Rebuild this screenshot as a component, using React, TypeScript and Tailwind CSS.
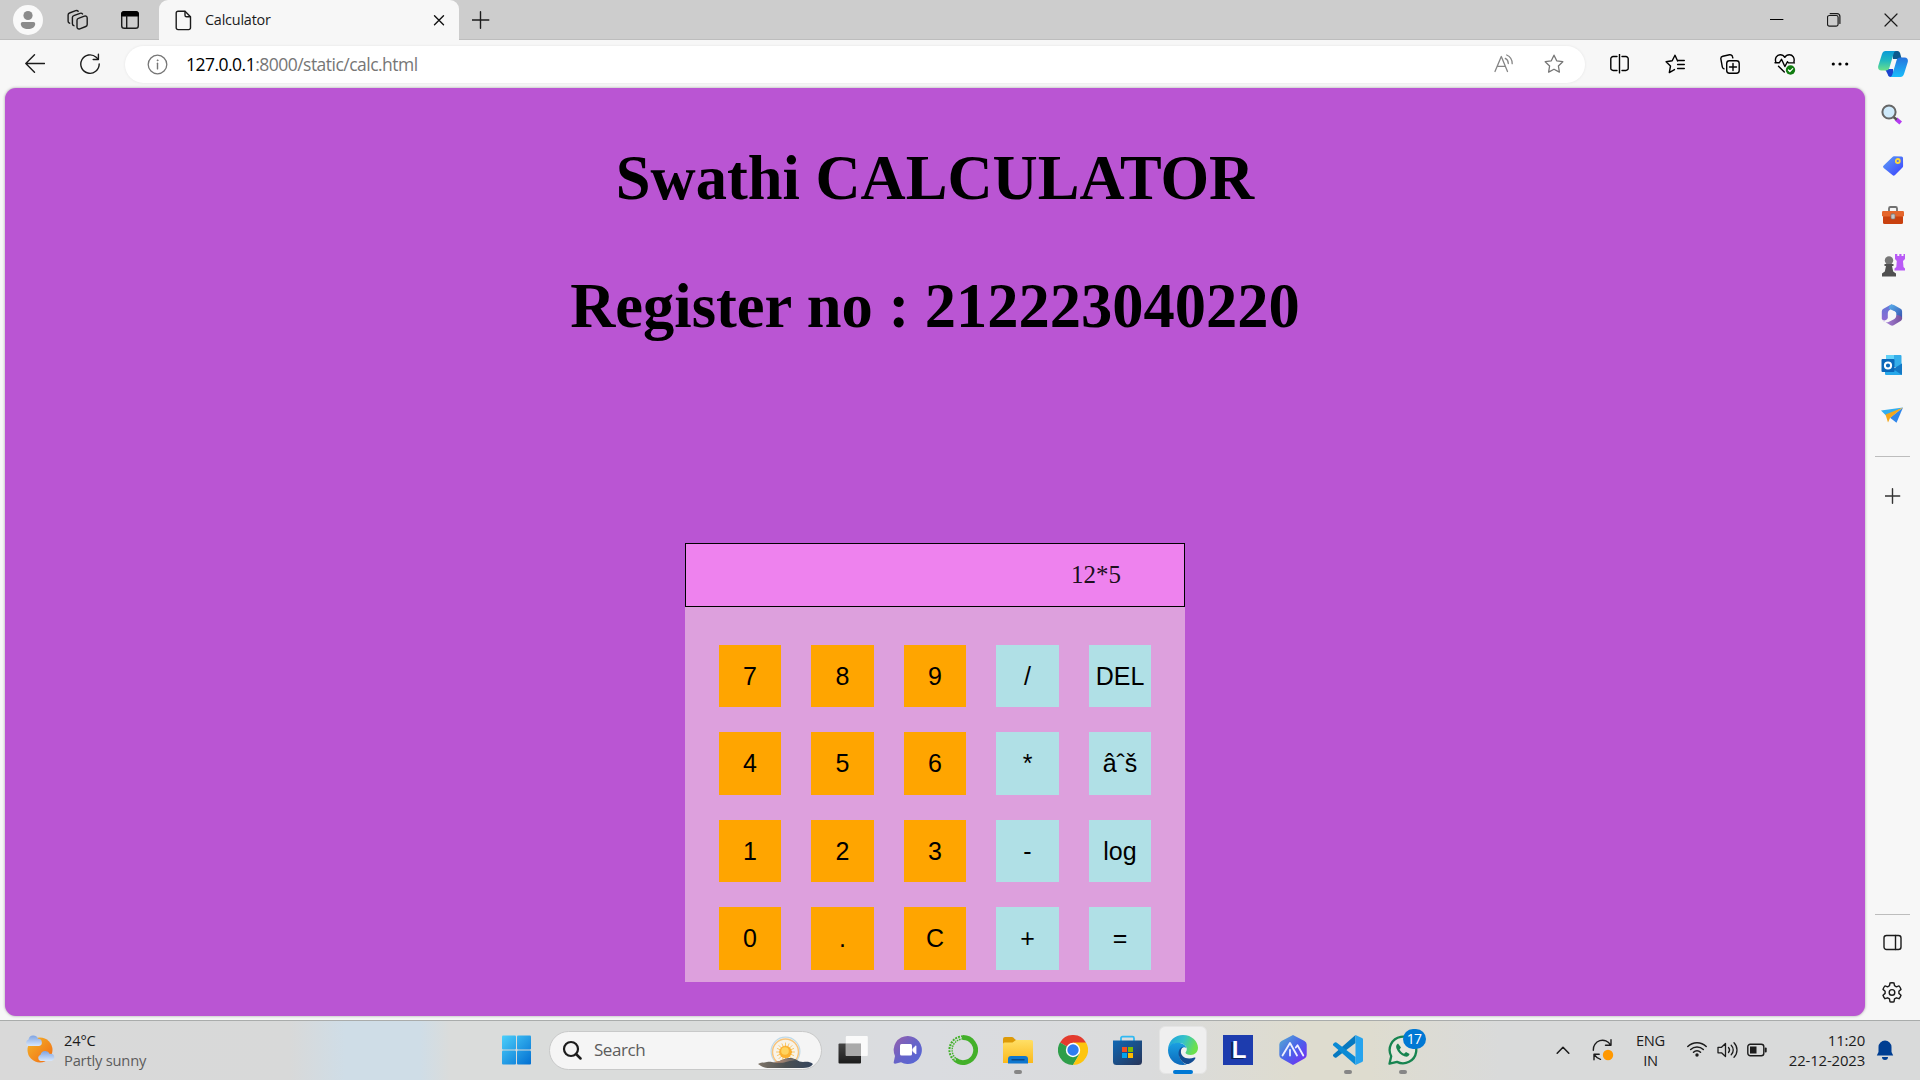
import React from "react";

type IconProps = { size?: number; w?: number; h?: number; className?: string; children: React.ReactNode };

function Icon({ size = 20, w, h, className = "", children }: IconProps) {
  const width = w ?? size;
  const height = h ?? size;
  return (
    <svg
      width={width}
      height={height}
      viewBox={`0 0 ${width} ${height}`}
      fill="none"
      stroke="currentColor"
      strokeWidth={1.4}
      strokeLinecap="round"
      strokeLinejoin="round"
      className={`block shrink-0 ${className}`}
    >
      {children}
    </svg>
  );
}

function Cell({ className = "", children }: { className?: string; children: React.ReactNode }) {
  return <div className={`flex shrink-0 items-center justify-center ${className}`}>{children}</div>;
}

const STAR = "M10 1.2l2.7 5.6 6.1.9-4.4 4.3 1 6.1-5.4-2.9-5.4 2.9 1-6.1L1.2 7.7l6.1-.9z";

function TabBar() {
  return (
    <div className="flex h-10 shrink-0 bg-[#cdcdcd] text-[#1b1b1b]">
      <div className="flex w-[159px] shrink-0 items-center border-b border-[#bdbdbd] pl-[13px]">
        <Cell className="h-[30px] w-[30px] rounded-full bg-[#f9f9f9]">
          <Icon size={30}>
            <g fill="#8b8b8b" stroke="none">
              <circle cx="15" cy="10.500" r="4.600" />
              <path d="M9.500 17h11a1.700 1.700 0 0 1 1.700 1.700c0 3.600-3.200 5.300-7.200 5.300s-7.200-1.700-7.200-5.300A1.700 1.700 0 0 1 9.500 17z" />
            </g>
          </Icon>
        </Cell>
        <Cell className="ml-6 w-[21px]">
          <Icon size={22}>
            <path d="M11.400 9.300l6-2.200c1.600-.5 2.800.3 2.800 1.900v6.500c0 1-.5 1.700-1.400 2l-6 2.300c-1.500.5-2.800-.3-2.800-1.900V11.300c0-1 .5-1.700 1.400-2z" />
            <path d="M6.900 16.700c-1-.3-1.500-.9-1.500-1.900V8.600c0-1 .5-1.700 1.400-2l6.200-2.300c1-.3 1.900-.1 2.500.6" />
            <path d="M2.600 14.200c-1-.3-1.500-.9-1.500-1.900V6c0-1 .5-1.700 1.400-2l6.200-2.300c1-.3 1.900-.1 2.500.6" />
          </Icon>
        </Cell>
        <Cell className="ml-8 w-5">
          <Icon size={20}>
            <rect x="1.700" y="1.700" width="16.600" height="16.600" rx="2.600" />
            <path d="M1.700 5.800V4.300a2.600 2.600 0 0 1 2.600-2.600h11.400a2.600 2.600 0 0 1 2.600 2.600v1.500z" fill="#000" stroke="#000" />
            <path d="M6.700 6v12" />
          </Icon>
        </Cell>
      </div>
      <div className="flex w-[300px] shrink-0 items-center rounded-t-[9px] bg-[#f7f7f7] pl-4">
        <Icon w={17} h={21}>
          <path d="M3 1.200h7l5.500 5.500v11.100a1.800 1.800 0 0 1-1.800 1.800H3a1.800 1.800 0 0 1-1.800-1.800V3A1.800 1.800 0 0 1 3 1.200z" />
          <path d="M10 1.500v3.700A1.600 1.600 0 0 0 11.600 6.800h3.700" />
        </Icon>
        <span className="ml-[13px] text-[14.400px] leading-5 tracking-[-0.200px]">Calculator</span>
        <Icon size={12} className="mr-[14px] ml-auto">
          <path d="M1.500 1.700l9 9M10.500 1.700l-9 9" stroke="#111" />
        </Icon>
      </div>
      <div className="flex grow items-center border-b border-[#bdbdbd] pl-[13px]">
        <Icon size={18}>
          <path d="M8.500 .7v16.600M.2 9h16.600" />
        </Icon>
        <div className="ml-auto flex">
          <Cell className="w-[57px]">
            <Icon size={14}><path d="M.1 6.500h12.800" stroke="#000" strokeWidth={1.200} /></Icon>
          </Cell>
          <Cell className="w-[57px]">
            <Icon size={14}>
              <rect x=".5" y="2.500" width="10.600" height="10.600" rx="1.800" strokeWidth={1.200} />
              <path d="M3.200.7h7a2.700 2.700 0 0 1 2.700 2.700v7" strokeWidth={1.200} />
            </Icon>
          </Cell>
          <Cell className="w-[58px]">
            <Icon size={14}><path d="M1 1l12 12M13 1L1 13" strokeWidth={1.200} /></Icon>
          </Cell>
        </div>
      </div>
    </div>
  );
}

function Toolbar() {
  return (
    <div className="flex h-12 shrink-0 items-center bg-[#f7f7f7] text-[#1b1b1b]">
      <Cell className="ml-[7px] w-[55px]">
        <Icon size={20}><path d="M19.500 9.500H.8M9.500 .8L.8 9.500l8.700 8.700" /></Icon>
      </Cell>
      <Cell className="w-[55px]">
        <Icon size={22}>
          <path d="M20.200 11a9.200 9.200 0 1 1-3-6.700l2 1.900" />
          <path d="M19.400 1.300v5.200h-5.200" />
        </Icon>
      </Cell>
      <div className="ml-2 flex h-[37px] w-[1460px] shrink-0 items-center rounded-full bg-white pl-[22px] text-[#767676] shadow-[0_0_3px_rgba(0,0,0,0.080)]">
        <Icon size={21}>
          <circle cx="10.500" cy="10.500" r="9.300" strokeWidth={1.300} />
          <path d="M10.500 9.300v5.600" />
          <circle cx="10.500" cy="6.300" r=".5" fill="currentColor" strokeWidth={0.800} />
        </Icon>
        <span className="-mt-px ml-[18px] text-[17.500px] leading-6 tracking-[-0.520px]">
          <span className="text-black">127.0.0.1</span>:8000/static/calc.html
        </span>
        <div className="mr-[6px] ml-auto flex">
          <Cell className="w-[50px]">
            <Icon size={20} className="text-[#858585]">
              <path d="M1 17.500L7.300 2.500l6.200 15M3.300 12.300h8" strokeWidth={1.300} />
              <path d="M11.300 4.400c1.900 1 3 2.900 3 5.200M12.700 1c3.400 1.500 5.500 4.800 5.500 8.700" strokeWidth={1.300} />
            </Icon>
          </Cell>
          <Cell className="w-[50px]">
            <Icon size={20}><path d={STAR} strokeWidth={1.300} /></Icon>
          </Cell>
        </div>
      </div>
      <div className="ml-[7px] flex text-black">
        <Cell className="w-[55px]">
          <Icon size={20}>
            <path d="M7 2.500H3.200A2.300 2.300 0 0 0 .8 4.800v9.400a2.300 2.300 0 0 0 2.400 2.300H7M12 2.500h3.800a2.300 2.300 0 0 1 2.400 2.300v9.400a2.300 2.300 0 0 1-2.400 2.300H12M9.500 .3v18.600" />
          </Icon>
        </Cell>
        <Cell className="w-[55px]">
          <Icon size={20}>
            <path d="M12.600 7L10 1.200 7.200 6.800l-6.100.9 4.400 4.300-1.200 6.600 5.200-3M12.600 6.500h6.700M12.600 10.500h6.700M12.600 14.500h6.700" />
          </Icon>
        </Cell>
        <Cell className="w-[55px]">
          <Icon size={20}>
            <rect x="6.700" y="6.700" width="12.500" height="12.500" rx="2.700" />
            <path d="M13 9.500v7M9.500 13h7" />
            <path d="M4 14.800a2.500 2.500 0 0 1-1.700-2L.9 5.200A2.500 2.500 0 0 1 2.800 2.300L9.500.8a2.500 2.500 0 0 1 3 1.900l.3 1.200" />
          </Icon>
        </Cell>
        <Cell className="w-[55px]">
          <Icon size={22}>
            <path d="M1.800 9C.5 5 3 1.700 6.200 1.700c2 0 3.700 1 4.600 2.600.9-1.600 2.600-2.600 4.600-2.600C18.700 1.700 21 5 19.900 9" />
            <path d="M1 9.800h4.200l2.300-3.500 3.400 7.200 2.500-4.800 1 1.200h6M4.500 13.200l5.800 5.800" />
            <circle cx="16.500" cy="17" r="4.700" fill="#107c10" stroke="none" />
            <path d="M14.400 17l1.500 1.500 2.800-2.900" stroke="#fff" strokeWidth={1.200} />
          </Icon>
        </Cell>
        <Cell className="w-[55px]">
          <Icon size={18}>
            <g fill="currentColor" stroke="none">
              <circle cx="2.300" cy="9" r="1.600" />
              <circle cx="9" cy="9" r="1.600" />
              <circle cx="15.700" cy="9" r="1.600" />
            </g>
          </Icon>
        </Cell>
        <Cell className="w-[51px]">
          <Icon w={30} h={28}>
            <defs>
              <linearGradient id="coA" x1="0" y1="0" x2="0" y2="1"><stop stopColor="#0a9ad7" /><stop offset=".5" stopColor="#22b9bf" /><stop offset="1" stopColor="#6be08a" /></linearGradient>
              <linearGradient id="coB" x1="0" y1="0" x2="0" y2="1"><stop stopColor="#2673dd" /><stop offset="1" stopColor="#19bdfb" /></linearGradient>
            </defs>
            <g stroke="none">
              <path d="M14 1h5.500c1.500 0 2.200 1 2.700 2.600L23.700 9H15z" fill="#0c5a8e" />
              <path d="M7 19h8l1 8h-3.500c-1.600 0-2.300-1-2.800-2.700z" fill="#1b44cf" />
              <path d="M7.500 1H18.500c-1.800 0-2.500 1.300-3 3l-4 13.500c-.6 2-1.500 3-3.600 3H3.500C.3 20.500-.3 18 .3 15.700L4 4C4.700 2 5.800 1 7.500 1z" fill="url(#coA)" />
              <path d="M22.500 27H11.500c1.800 0 2.500-1.300 3-3l4-13.500c.6-2 1.500-3 3.600-3h4.400c3.200 0 3.800 2.500 3.200 4.800L26 24c-.7 2-1.800 3-3.500 3z" fill="url(#coB)" />
            </g>
          </Icon>
        </Cell>
      </div>
    </div>
  );
}

const DIGIT = "bg-[#ffa500]";
const OP = "bg-[#b0e0e6]";
const KEYS: [string, string][] = [
  ["7", DIGIT], ["8", DIGIT], ["9", DIGIT], ["/", OP], ["DEL", OP],
  ["4", DIGIT], ["5", DIGIT], ["6", DIGIT], ["*", OP], ["âˆš", OP],
  ["1", DIGIT], ["2", DIGIT], ["3", DIGIT], ["-", OP], ["log", OP],
  ["0", DIGIT], [".", DIGIT], ["C", DIGIT], ["+", OP], ["=", OP],
];

function Page() {
  return (
    <main className="ml-[5px] flex h-[928px] w-[1860px] shrink-0 flex-col items-center rounded-[11px] bg-[#ba55d3] pt-[54px] text-black shadow-[0_0_3px_rgba(0,0,0,0.350)]">
      <h1 className="font-['Liberation_Serif',serif] text-[62.500px] leading-[72px] font-bold">Swathi CALCULATOR</h1>
      <h1 className="mt-[56px] font-['Liberation_Serif',serif] text-[62.500px] leading-[72px] font-bold">Register no : 212223040220</h1>
      <div className="mt-[201px] h-[439px] w-[500px] bg-[#dda0dd]">
        <div className="flex h-16 items-center justify-end border border-black bg-[#ee82ee] pr-[63px] font-['Liberation_Serif',serif] text-[25px] text-black/90">
          12*5
        </div>
        <div className="mt-[37.500px] ml-[33.750px] grid grid-cols-[repeat(5,62.500px)] gap-x-[30px] gap-y-[25px]">
          {KEYS.map(([label, tone]) => (
            <button key={label} className={`h-[62.500px] pt-px font-['Liberation_Sans',sans-serif] text-[25px] ${tone}`}>
              {label}
            </button>
          ))}
        </div>
      </div>
    </main>
  );
}

function Sidebar() {
  const cell = "h-[50px] w-full";
  return (
    <aside className="flex w-[55px] shrink-0 flex-col items-center pt-[2px] text-[#1b1b1b]">
      <Cell className={cell}>
        <Icon size={22} className="-ml-[2px]">
          <path d="M15 15l4.700 4" stroke="#b43bf0" strokeWidth={4} strokeLinecap="butt" />
          <path d="M12.500 13l2.500 2" stroke="#555" strokeWidth={2.500} />
          <circle cx="8" cy="8" r="6.600" fill="#cfeafb" stroke="#666" strokeWidth={2} />
        </Icon>
      </Cell>
      <Cell className={cell}>
        <Icon size={22} className="mt-px">
          <defs><linearGradient id="tag" x1="0" y1="0" x2="1" y2="1"><stop stopColor="#5ea2f4" /><stop offset="1" stopColor="#3a3fff" /></linearGradient></defs>
          <path d="M12 1.200l7.500.3a1.500 1.500 0 0 1 1.500 1.500l.1 8a2 2 0 0 1-.6 1.500l-7.500 7.600a1.800 1.800 0 0 1-2.600 0l-8.700-7a1.700 1.700 0 0 1 0-2.600L10.500 2a2 2 0 0 1 1.500-.8z" fill="url(#tag)" stroke="none" />
          <circle cx="15.800" cy="6" r="2" stroke="#ffd93a" strokeWidth={1.800} />
        </Icon>
      </Cell>
      <Cell className={cell}>
        <Icon size={22} className="mt-[2px]">
          <path d="M7 6V3.500A1.500 1.500 0 0 1 8.500 2h5A1.500 1.500 0 0 1 15 3.500V6" stroke="#707070" strokeWidth={1.800} />
          <rect x="1" y="10" width="20" height="9" rx="1.500" fill="#c9410f" stroke="none" />
          <rect x="0" y="6" width="22" height="5.500" rx="1.200" fill="#e5662c" stroke="none" />
          <rect x="9" y="9" width="4" height="5" rx="1" fill="#c6c6c6" stroke="#777" strokeWidth={0.700} />
        </Icon>
      </Cell>
      <Cell className={cell}>
        <Icon size={24}>
          <g stroke="none">
            <path d="M14 1h2.300v2h2V1h2.200v2h2V1H24v5l-2 2 .5 6 1.500 1.500v2H13.500v-2l1.800-1.500.5-6L14 6z" fill="#b95af6" />
            <circle cx="8" cy="7.500" r="4.200" fill="#777" />
            <path d="M3.500 11h9v2H11l1.200 5.500 2.800 2V23.500H1V20.500l2.800-2L5 13H3.500z" fill="#505050" />
          </g>
        </Icon>
      </Cell>
      <Cell className={cell}>
        <Icon size={22} className="-ml-px">
          <defs>
            <linearGradient id="mA" x1="0" y1="0" x2="0" y2="1"><stop stopColor="#5f78d8" /><stop offset="1" stopColor="#8e6ad2" /></linearGradient>
            <linearGradient id="mB" x1="0" y1="0" x2="1" y2="1"><stop stopColor="#5ab4ee" /><stop offset="1" stopColor="#3550ae" /></linearGradient>
            <linearGradient id="mC" x1="0" y1="0" x2="1" y2="0"><stop stopColor="#b48ee6" /><stop offset="1" stopColor="#74509c" /></linearGradient>
          </defs>
          <g stroke="none">
            <path d="M11 0L2.500 4.700A3 3 0 0 0 .8 7.400v7.400c1 2.500 5 2 6-.8V9.500c0-2 1-3.200 2.500-4z" fill="url(#mA)" />
            <path d="M9 1.200C10.300.3 11.700.3 13 1l6.600 3.700a3 3 0 0 1 1.500 2.700v7.200L15.300 11V9.700c0-1-.4-1.800-1.300-2.300L7.500 4.500z" fill="url(#mB)" />
            <path d="M.8 14.800c.5 1 1 1.700 1.800 2.200l7 4.300a3 3 0 0 0 3 0l7-4.300a3 3 0 0 0 1.500-2.500c.2-2-2-3.500-5.800-3.500 0 2-1 3.500-2.800 4.500L8 17.800c-2.600 1.300-6 .2-7.200-3z" fill="url(#mC)" />
            <circle cx="11" cy="10.700" r="3.900" fill="#f7f7f7" />
          </g>
        </Icon>
      </Cell>
      <Cell className={cell}>
        <Icon size={22} className="-ml-px">
          <g stroke="none">
            <rect x="5" y="1" width="15.500" height="12" rx="1" fill="#35aeea" />
            <path d="M5 1h8v8H5z" fill="#62d2f8" />
            <path d="M4 10l9 5 8-5.500V20a1 1 0 0 1-1 1H5a1 1 0 0 1-1-1z" fill="#28a8ea" />
            <path d="M21 9.500V21L12 15z" fill="#1478c5" />
            <rect x=".5" y="5" width="13" height="13" rx="1" fill="#0b67b9" />
          </g>
          <circle cx="7" cy="11.500" r="3.100" stroke="#fff" strokeWidth={2} />
        </Icon>
      </Cell>
      <Cell className={cell}>
        <Icon size={22} className="-ml-px">
          <g stroke="none">
            <path d="M0 6.500L22 3.500 5.500 12z" fill="#32aef0" />
            <path d="M22 3.500l-6.500 15.200-6.500-5z" fill="#2f86ea" />
            <path d="M4.500 10.500L22 3.500 9 14l-2 4.500z" fill="#f3a71c" />
          </g>
        </Icon>
      </Cell>
      <div className="mt-4 h-px w-[35px] bg-[#bdbdbd]" />
      <Icon size={16} className="mt-[31px]"><path d="M7.500 .8v14.400M.3 8h14.400" stroke="#333" /></Icon>
      <div className="mt-auto h-px w-[35px] bg-[#bdbdbd]" />
      <Cell className="mt-[3px] h-[50px] w-full">
        <Icon size={20}>
          <rect x="1" y="2.500" width="17" height="14" rx="2.500" />
          <path d="M12.500 2.500v14" />
        </Icon>
      </Cell>
      <Cell className="mb-[2px] h-[50px] w-full">
        <Icon size={22} className="-ml-px">
          <path d="M9 1a9.500 9.500 0 0 1 4 0l.5 2.700 1.900 1.100 2.600-.9a9.500 9.500 0 0 1 2 3.500l-2.100 1.800v2.200l2.100 1.800a9.500 9.500 0 0 1-2 3.500l-2.600-.9-1.900 1.100L13 19.800a9.500 9.500 0 0 1-4 0l-.5-2.900-1.900-1.100-2.600.9a9.500 9.500 0 0 1-2-3.500l2.100-1.800V9.200L2 7.400a9.500 9.500 0 0 1 2-3.500l2.600.9 1.900-1.100z" />
          <circle cx="11" cy="10.400" r="2.800" />
        </Icon>
      </Cell>
    </aside>
  );
}

function AppSlot({ dot = false, active = false, children }: { dot?: boolean; active?: boolean; children: React.ReactNode }) {
  return (
    <div className="flex w-[55px] shrink-0 justify-center">
      <div
        className={
          active
            ? "relative flex h-12 w-12 items-center justify-center rounded-md border border-[#e4e4e4] bg-[#efefef]"
            : "relative flex h-12 w-12 items-center justify-center"
        }
      >
        {children}
        {dot && <span className="absolute bottom-0 h-1 w-2 rounded-full bg-[#868686]" />}
        {active && <span className="absolute -bottom-px h-1 w-5 rounded-full bg-[#0078d4]" />}
      </div>
    </div>
  );
}

function Taskbar() {
  return (
    <footer className="flex h-[60px] shrink-0 items-center border-t border-[#a9acab] bg-[linear-gradient(90deg,#d9d9d9_0px,#d8d9d9_290px,#cfdde7_345px,#cfdde7_420px,#dadcdb_450px,#dadcdb_700px,#dadce0_930px,#dadbdc_1150px,#dedccf_1300px,#dedccf_1370px,#d9dada_1500px,#d9dada_1920px)] pb-px text-[#1c1c1c]">
      <div className="flex w-[489px] shrink-0 items-center pl-[25px]">
        <Icon size={30} className="-mt-[3px]">
          <defs>
            <linearGradient id="sun" x1="0" y1="0" x2="1" y2="1"><stop stopColor="#f3b62b" /><stop offset="1" stopColor="#f26a12" /></linearGradient>
            <linearGradient id="cloud" x1="0" y1="0" x2="0" y2="1"><stop stopColor="#7fa4e3" /><stop offset="1" stopColor="#d8e7fb" /></linearGradient>
          </defs>
          <g stroke="none">
            <circle cx="15" cy="16" r="12.500" fill="url(#sun)" />
            <path d="M3.500 12a3.400 3.400 0 0 1 0-6.500A5 5 0 0 1 13 4.700 3.700 3.700 0 0 1 14 12z" fill="url(#cloud)" />
            <path d="M15.500 27a3.300 3.300 0 0 1 0-6.300 5 5 0 0 1 9.300-.8A3.600 3.600 0 0 1 26.500 27z" fill="url(#cloud)" />
          </g>
        </Icon>
        <div className="-mt-px ml-[9px] text-[14.700px] leading-5">
          <div className="tracking-[-0.200px]">24°C</div>
          <div className="tracking-[-0.200px] text-[#5c5c5c]">Partly sunny</div>
        </div>
      </div>
      <AppSlot>
        <Icon size={30}>
          <defs><linearGradient id="win" gradientUnits="userSpaceOnUse" x1="0" y1="0" x2="30" y2="30"><stop stopColor="#4cd0fb" /><stop offset="1" stopColor="#006cd0" /></linearGradient></defs>
          <g stroke="none" fill="url(#win)">
            <rect x="0" y=".5" width="14" height="14" rx="1" />
            <rect x="15" y=".5" width="14" height="14" rx="1" />
            <rect x="0" y="15.500" width="14" height="14" rx="1" />
            <rect x="15" y="15.500" width="14" height="14" rx="1" />
          </g>
        </Icon>
      </AppSlot>
      <div className="ml-[5px] flex h-[39px] w-[273px] shrink-0 items-center rounded-full border border-[#c8c9c9] bg-[#f5f5f5] pl-3">
        <Icon size={20}>
          <circle cx="9" cy="9" r="7" strokeWidth={2.200} />
          <path d="M14 14l4.500 4.500" strokeWidth={2.500} />
        </Icon>
        <span className="ml-3 text-[17px] leading-6 tracking-[-0.450px] text-[#5c5c5c]">Search</span>
        <Icon w={56} h={33} className="mt-[4px] mr-[7px] ml-auto">
          <defs>
            <linearGradient id="hill" x1="0" y1="0" x2="1" y2="0"><stop stopColor="#7e7468" /><stop offset=".5" stopColor="#4b5052" /><stop offset="1" stopColor="#33445d" /></linearGradient>
            <linearGradient id="hillTop" x1="0" y1="0" x2="1" y2="0"><stop stopColor="#c69273" /><stop offset="1" stopColor="#5f6468" /></linearGradient>
          </defs>
          <circle cx="27.500" cy="15.500" r="14.400" stroke="#bed9e8" strokeWidth={1.200} />
          <circle cx="27.500" cy="16" r="13" stroke="#f7c37b" strokeWidth={1.400} fill="#f8f3e8" />
          <g stroke="#f7b637" strokeWidth={0.700}>
            <path d="M27.500 7v18M18.500 16h18M21 9.600l13 13M34 9.600l-13 13M24 7.800l7 16.400M31 7.800l-7 16.400M19.300 12.500l16.400 7M19.300 19.500l16.400-7" />
          </g>
          <circle cx="27.500" cy="16" r="6" fill="#fdb22e" stroke="#f8a21c" strokeWidth={0.500} />
          <circle cx="27" cy="15" r="3.800" fill="#ffd45f" stroke="none" />
          <path d="M0 28c3-2 6-1 9-2 4-1 6 1 9 0 5-1 9-4 14-4 6 0 8 4 13 4 3 0 6-1 10 2-2 3-6 4-10 4H12c-5 0-8-1-12-4z" fill="url(#hill)" stroke="none" />
          <path d="M15 26c7 0 10-3.500 17-3.500 3 0 5 1 7 1.700-7 0-12 2.600-16 2.600-4 0-5 0-8-.8z" fill="url(#hillTop)" stroke="none" />
        </Icon>
      </div>
      <div className="ml-[3px] flex">
        <AppSlot>
          <Icon size={30}>
            <defs><linearGradient id="tv" x1="0" y1="0" x2="0" y2="1"><stop stopColor="#444" /><stop offset="1" stopColor="#1c1c1c" /></linearGradient></defs>
            <rect x=".5" y="8.500" width="22.500" height="20" rx="1" fill="url(#tv)" stroke="none" />
            <rect x="7.800" y="1" width="22" height="20" rx="1" fill="#fff" fillOpacity=".85" stroke="none" />
            <rect x="7.800" y="8.500" width="15.200" height="12.500" fill="#aaa" stroke="none" />
          </Icon>
        </AppSlot>
        <AppSlot>
          <Icon size={30}>
            <defs><linearGradient id="chat" x1="0" y1="0" x2="1" y2="1"><stop stopColor="#9860ac" /><stop offset=".5" stopColor="#6763c8" /><stop offset="1" stopColor="#5367d8" /></linearGradient></defs>
            <path d="M15 1a14 14 0 1 1-7 26.200L2 28.700c-1 0-1.500-.5-1.300-1.500L2 21A14 14 0 0 1 15 1z" fill="url(#chat)" stroke="none" />
            <rect x="7" y="9" width="12" height="11.500" rx="1.500" fill="#fff" stroke="none" />
            <path d="M20 13.500l3-2.700v8.200L20 16.500z" fill="#fff" stroke="#fff" strokeWidth={0.800} />
          </Icon>
        </AppSlot>
        <AppSlot>
          <Icon size={30}>
            <path d="M15 2.500a12.500 12.500 0 1 1-8 22" stroke="#43b02a" strokeWidth={4.800} strokeLinecap="butt" />
            <path d="M15 2.500A12.500 12.500 0 0 0 7 24.500" stroke="#43b02a" strokeWidth={4.400} strokeLinecap="butt" strokeDasharray="1.800 1" />
            <path d="M13.500 2.800A12.500 12.500 0 0 0 7.500 24.800" stroke="#d9dde0" strokeWidth={1.100} strokeDasharray="2 1.500" />
          </Icon>
        </AppSlot>
        <AppSlot dot>
          <Icon size={30}>
            <defs><linearGradient id="fold" x1="0" y1="0" x2="0" y2="1"><stop stopColor="#ffdf66" /><stop offset="1" stopColor="#fbb91b" /></linearGradient></defs>
            <g stroke="none">
              <path d="M0 4a2 2 0 0 1 2-2h7c2 0 2.500 3 4.500 3v4H0z" fill="#dd9a08" />
              <path d="M13 5h15.500A1.500 1.500 0 0 1 30 6.500V28H0V9A1.500 1.500 0 0 1 1.500 7.500H9.500z" fill="url(#fold)" />
              <path d="M5 28.500V24a3 3 0 0 1 3-3h14a3 3 0 0 1 3 3v4.500z" fill="#0f77cf" />
            </g>
            <path d="M9 24.700h12" stroke="#0b4a86" />
          </Icon>
        </AppSlot>
        <AppSlot>
          <Icon size={30}>
            <g stroke="none">
              <path d="M15 15L2 7.500A15 15 0 0 1 28 7.500z" fill="#e33b2e" />
              <path d="M15 15L2 7.500A15 15 0 0 0 15 30l6.500-11z" fill="#2e9e4a" />
              <path d="M15 15V7.500h13A15 15 0 0 1 15 30l6.500-11z" fill="#fdc50e" />
              <circle cx="15" cy="15" r="7.200" fill="#fff" />
              <circle cx="15" cy="15" r="5.700" fill="#2f7cf0" />
            </g>
          </Icon>
        </AppSlot>
        <AppSlot>
          <Icon size={30}>
            <defs><linearGradient id="store" x1="0" y1="0" x2="1" y2="1"><stop stopColor="#0f68b5" /><stop offset="1" stopColor="#273458" /></linearGradient></defs>
            <path d="M8 6V3.200a1.500 1.500 0 0 1 1.500-1.500h10a1.500 1.500 0 0 1 1.500 1.500V6" stroke="#31b9f2" strokeWidth={1.800} />
            <path d="M0 5.500h29v21A3.500 3.500 0 0 1 25.500 30H3.500A3.500 3.500 0 0 1 0 26.500z" fill="url(#store)" stroke="none" />
            <g stroke="none">
              <rect x="9" y="12" width="5" height="5" fill="#f25022" />
              <rect x="15" y="12" width="5" height="5" fill="#7fba00" />
              <rect x="9" y="18" width="5" height="5" fill="#00a4ef" />
              <rect x="15" y="18" width="5" height="5" fill="#ffb900" />
            </g>
          </Icon>
        </AppSlot>
        <AppSlot active>
          <Icon size={30}>
            <defs>
              <linearGradient id="edA" x1="0" y1="0" x2="1" y2=".3"><stop stopColor="#1b9ee0" /><stop offset=".55" stopColor="#35c2c9" /><stop offset="1" stopColor="#6be04c" /></linearGradient>
              <linearGradient id="edB" x1="0" y1="0" x2="0" y2="1"><stop stopColor="#1aa0e2" /><stop offset="1" stopColor="#0c68bb" /></linearGradient>
            </defs>
            <g stroke="none">
              <path d="M0 14C.8 5.500 7 0 15 0c9 0 15 6.500 15 12.800 0 4.500-3.300 7.200-7.200 7.200-3.300 0-5.300-1-5.300-2.200 0-.8 1.300-1.300 1.300-3.800 0-3-3.500-6-8-6C5.500 8 1.500 10.500 0 14z" fill="url(#edA)" />
              <path d="M0 15c0-4.500 4.500-7.300 9.500-7.300 4.500 0 8.300 2.300 9 5.300-4-2.500-8.500 2-7.200 8 1 4.500 4.200 7.500 7.700 8.500C8 32 0 24.500 0 15z" fill="url(#edB)" />
              <path d="M15.500 11.700c-3.800.3-5.800 4.800-4.500 9.300 1.600 5.500 6 8.500 9.500 8 3-1 5.500-3.300 6.800-5.500.4-.8-.2-1.200-1-.9-7.500 3-14.300-1-13.300-7 .2-1.700 1-3 2.500-3.900z" fill="#134c92" />
            </g>
          </Icon>
        </AppSlot>
        <AppSlot>
          <div className="flex h-[30px] w-[30px] items-center justify-center bg-[#1d3cae] pl-[3px] font-['Liberation_Sans',sans-serif] text-[24px] leading-none font-bold text-white [text-shadow:-2px_1px_0_#0c2054]">
            L
          </div>
        </AppSlot>
        <AppSlot>
          <Icon size={30}>
            <defs><linearGradient id="hex" x1="0" y1="0" x2="1" y2="1"><stop stopColor="#55b0d0" /><stop offset=".5" stopColor="#4a62ea" /><stop offset="1" stopColor="#7b25f5" /></linearGradient></defs>
            <path d="M15 0l11.500 6A4 4 0 0 1 28.700 9.500v10.500a4 4 0 0 1-2.200 3.500L15 30 3.500 23.500A4 4 0 0 1 1.300 20V9.500A4 4 0 0 1 3.500 6z" fill="url(#hex)" stroke="none" />
            <path d="M4.500 20.500L12 8l7 12.500M12 15v5.500M17.800 12.500l1.700-2.200 5.800 10.200" stroke="#eef0ff" strokeWidth={1.800} />
          </Icon>
        </AppSlot>
        <AppSlot dot>
          <Icon size={30}>
            <g stroke="none">
              <path d="M22.500 0v8L3.500 22.500a1.500 1.500 0 0 1-1.800 0L.3 21.200a1.200 1.200 0 0 1 0-1.800z" fill="#0779c0" />
              <path d="M22.500 30v-8L3.500 7.500a1.500 1.500 0 0 0-1.800 0L.3 8.800a1.200 1.200 0 0 0 0 1.800z" fill="#0a8ad5" />
              <path d="M22.500 0L29 3a1.700 1.700 0 0 1 1 1.500v21a1.700 1.700 0 0 1-1 1.500l-6.500 3z" fill="#27a4ee" />
            </g>
          </Icon>
        </AppSlot>
        <AppSlot dot>
          <Icon size={30}>
            <path d="M1.500 28.700l1.700-7.500A13.300 13.300 0 1 1 9 26.900z" stroke="#178450" strokeWidth={2.300} fill="#e6e6dd" />
            <path d="M10 8.500c-2 1-2.200 3-1.500 5 1.500 4 4.500 6.800 8.500 8 2.300.6 4-.5 4.600-2.500l-3.600-2-2 1.800c-2-1-3.500-2.300-4.500-4.300l1.500-2z" fill="#178450" stroke="none" />
          </Icon>
          <span className="absolute top-[3px] right-[1px] flex h-5 w-[23px] items-center justify-center rounded-full bg-[#0078d4] text-[14px] leading-none tracking-[-0.800px] text-white">17</span>
        </AppSlot>
      </div>
      <div className="ml-auto flex items-center pr-[26px]">
        <Icon w={14} h={9}><path d="M1.200 7.200L7 1.300l5.800 5.900" strokeWidth={1.600} /></Icon>
        <Icon size={22} className="ml-[22px]">
          <path d="M1.300 11.200A9.200 9.200 0 0 1 18.500 6M19 .8v5.500h-5.500M2 20.800v-5.500h5.200M2.500 15.800c1.500 2.300 3.500 3.900 6 4.600" />
          <circle cx="16" cy="16" r="5.200" fill="#ff9800" stroke="none" />
        </Icon>
        <div className="-mt-px ml-[3px] w-[67px] text-center text-[14.700px] leading-5 tracking-[-0.350px]">
          <div>ENG</div>
          <div>IN</div>
        </div>
        <Icon w={20} h={16} className="ml-[3px] -mt-[2px]">
          <path d="M.8 5.500a13 13 0 0 1 18.400 0M3.700 8.500a9 9 0 0 1 12.600 0M6.500 11.300a5 5 0 0 1 7 0" strokeWidth={1.500} />
          <circle cx="10" cy="14" r="1.700" fill="currentColor" stroke="none" />
        </Icon>
        <Icon w={21} h={18} className="ml-[10px]">
          <path d="M1 6.300h3.500L8.500 2.500v13L4.500 11.800H1z" strokeWidth={1.300} />
          <path d="M11.500 6.500c1.300 1.500 1.300 3.500 0 5M14.200 4.200c2.700 2.700 2.700 6.900 0 9.600M17 1.800c4 4 4 10.400 0 14.400" strokeWidth={1.300} />
        </Icon>
        <Icon w={20} h={14} className="ml-[9px]">
          <rect x=".8" y="1.200" width="16" height="11.600" rx="2.500" />
          <rect x="3" y="3.500" width="6.500" height="7" fill="currentColor" stroke="none" />
          <path d="M18.700 5.500v3" strokeWidth={2} />
        </Icon>
        <div className="-mt-px ml-[16px] w-[82px] text-right text-[14.900px] leading-5 tracking-[-0.150px] whitespace-nowrap">
          <div>11:20</div>
          <div>22-12-2023</div>
        </div>
        <Icon w={18} h={20} className="ml-[11px] text-[#003e92]">
          <path d="M9 .5A6.500 6.500 0 0 0 2.500 7v5L.8 15.500h16.400L15.500 12V7A6.500 6.500 0 0 0 9 .5z" fill="currentColor" stroke="none" />
          <path d="M6 17h6a3 3 0 0 1-6 0z" fill="currentColor" stroke="none" />
        </Icon>
      </div>
    </footer>
  );
}

export default function App() {
  return (
    <div className="flex h-[1080px] w-[1920px] flex-col overflow-hidden bg-[#f7f7f7] font-['Open_Sans','Noto_Sans',sans-serif]">
      <TabBar />
      <Toolbar />
      <div className="flex h-[932px] shrink-0">
        <Page />
        <Sidebar />
      </div>
      <Taskbar />
    </div>
  );
}
